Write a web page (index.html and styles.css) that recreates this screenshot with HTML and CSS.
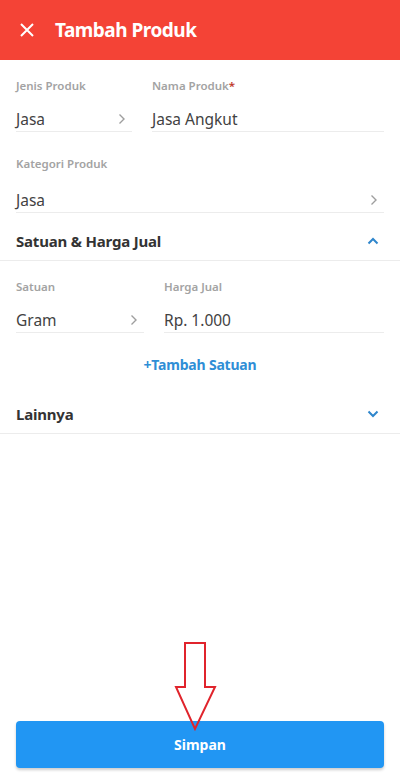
FILE: index.html
```html
<!DOCTYPE html>
<html lang="id">

<head>
    <meta charset="UTF-8">
    <meta name="viewport" content="width=device-width, initial-scale=1.0">
    <link rel="stylesheet" href="styles.css">
    <title>Tambah Produk</title>
</head>

<body>
    <div class="screen">
        <header class="topbar">
            <svg class="close-icon" width="14" height="14" viewBox="0 0 14 14">
                <path d="M1 1 L13 13 M13 1 L1 13" stroke="#fff" stroke-width="2" fill="none" />
            </svg>
            <h1>Tambah Produk</h1>
        </header>

        <section class="form-block">
            <div class="row">
                <div class="field field-left">
                    <div class="label">Jenis Produk</div>
                    <div class="value">
                        <span>Jasa</span>
                        <svg class="chev" width="8" height="12" viewBox="0 0 8 12">
                            <path d="M1.5 1.5 L6 6 L1.5 10.5" stroke="#9e9e9e" stroke-width="1.4" fill="none" />
                        </svg>
                    </div>
                </div>
                <div class="field field-right">
                    <div class="label">Nama Produk<span class="req">*</span></div>
                    <div class="value"><span>Jasa Angkut</span></div>
                </div>
            </div>
            <div class="field field-full">
                <div class="label">Kategori Produk</div>
                <div class="value">
                    <span>Jasa</span>
                    <svg class="chev" width="8" height="12" viewBox="0 0 8 12">
                        <path d="M1.5 1.5 L6 6 L1.5 10.5" stroke="#9e9e9e" stroke-width="1.4" fill="none" />
                    </svg>
                </div>
            </div>
        </section>

        <div class="section-head">
            <span>Satuan &amp; Harga Jual</span>
            <svg width="12" height="8" viewBox="0 0 12 8">
                <path d="M1.5 6.5 L6 2 L10.5 6.5" stroke="#2f86cc" stroke-width="2" fill="none" />
            </svg>
        </div>

        <section class="form-block unit-block">
            <div class="row row-unit">
                <div class="field field-left">
                    <div class="label">Satuan</div>
                    <div class="value">
                        <span>Gram</span>
                        <svg class="chev" width="8" height="12" viewBox="0 0 8 12">
                            <path d="M1.5 1.5 L6 6 L1.5 10.5" stroke="#9e9e9e" stroke-width="1.4" fill="none" />
                        </svg>
                    </div>
                </div>
                <div class="field field-right">
                    <div class="label">Harga Jual</div>
                    <div class="value"><span>Rp. 1.000</span></div>
                </div>
            </div>
            <div class="add-unit">+Tambah Satuan</div>
        </section>

        <div class="section-head section-other">
            <span>Lainnya</span>
            <svg width="12" height="8" viewBox="0 0 12 8">
                <path d="M1.5 1.5 L6 6 L10.5 1.5" stroke="#2f86cc" stroke-width="2" fill="none" />
            </svg>
        </div>

        <div class="bottom">
            <button class="save-btn">Simpan</button>
        </div>

        <!-- annotation arrow drawn over the button -->
        <svg class="pointer" width="400" height="777" viewBox="0 0 400 777">
            <polygon points="185,643 205,643 205,687 215,687 195,729 176,687 185,687"
                fill="none" stroke="#e0242c" stroke-width="2" stroke-linejoin="miter" />
        </svg>
    </div>
</body>

</html>
```

FILE: styles.css
```css
body {
    margin: 0;
    padding: 0;
    font-family: 'Noto Sans', 'Open Sans', sans-serif;
    background: #fff;
}

.screen {
    position: relative;
    width: 400px;
    height: 777px;
    display: flex;
    flex-direction: column;
    overflow: hidden;
}

.topbar {
    height: 60px;
    background-color: #f44336;
    display: flex;
    align-items: center;
    padding-left: 20px;
    box-sizing: border-box;
    flex-shrink: 0;
}

.close-icon {
    margin-right: 21px;
}

.topbar h1 {
    margin: 0;
    color: #fff;
    font-size: 19px;
    font-weight: 700;
    letter-spacing: -0.5px;
}

.form-block {
    padding: 18px 16px 0;
}

.row {
    display: flex;
    gap: 20px;
}

.field-left {
    width: 116px;
    flex-shrink: 0;
}

.row-unit .field-left {
    width: 128px;
}

.field-right {
    flex: 1;
}

.field-full {
    margin-top: 24px;
}

.label {
    font-size: 11.5px;
    line-height: 16px;
    color: #a3a3a3;
    font-weight: 600;
}

.req {
    color: #c0392b;
}

.value {
    margin-top: 13px;
    height: 23px;
    display: flex;
    align-items: center;
    justify-content: space-between;
    border-bottom: 1px solid #ececec;
    font-size: 15.5px;
    color: #424242;
    padding-bottom: 1px;
}

.field-full .value {
    margin-top: 16px;
}

.chev {
    margin-right: 6px;
}

.section-head {
    margin-top: 9px;
    height: 38px;
    padding: 0 16px 0 16px;
    display: flex;
    align-items: center;
    justify-content: space-between;
    border-bottom: 1px solid #ececec;
    font-size: 15px;
    font-weight: 700;
    color: #333;
    letter-spacing: -0.2px;
}

.section-head svg {
    margin-right: 5px;
}

.unit-block {
    padding-top: 18px;
}

.add-unit {
    text-align: center;
    margin-top: 22px;
    font-size: 14px;
    font-weight: 700;
    color: #2f8ed6;
    letter-spacing: -0.2px;
}

.section-other {
    margin-top: 21px;
}

.bottom {
    margin-top: auto;
    padding: 0 16px 9px;
}

.save-btn {
    width: 100%;
    height: 47px;
    border: none;
    border-radius: 4px;
    background-color: #2196f3;
    color: #fff;
    font-family: inherit;
    font-size: 14px;
    font-weight: 700;
    box-shadow: 0 2px 3px rgba(0, 0, 0, 0.2);
}

.pointer {
    position: absolute;
    left: 0;
    top: 0;
    pointer-events: none;
}
```
